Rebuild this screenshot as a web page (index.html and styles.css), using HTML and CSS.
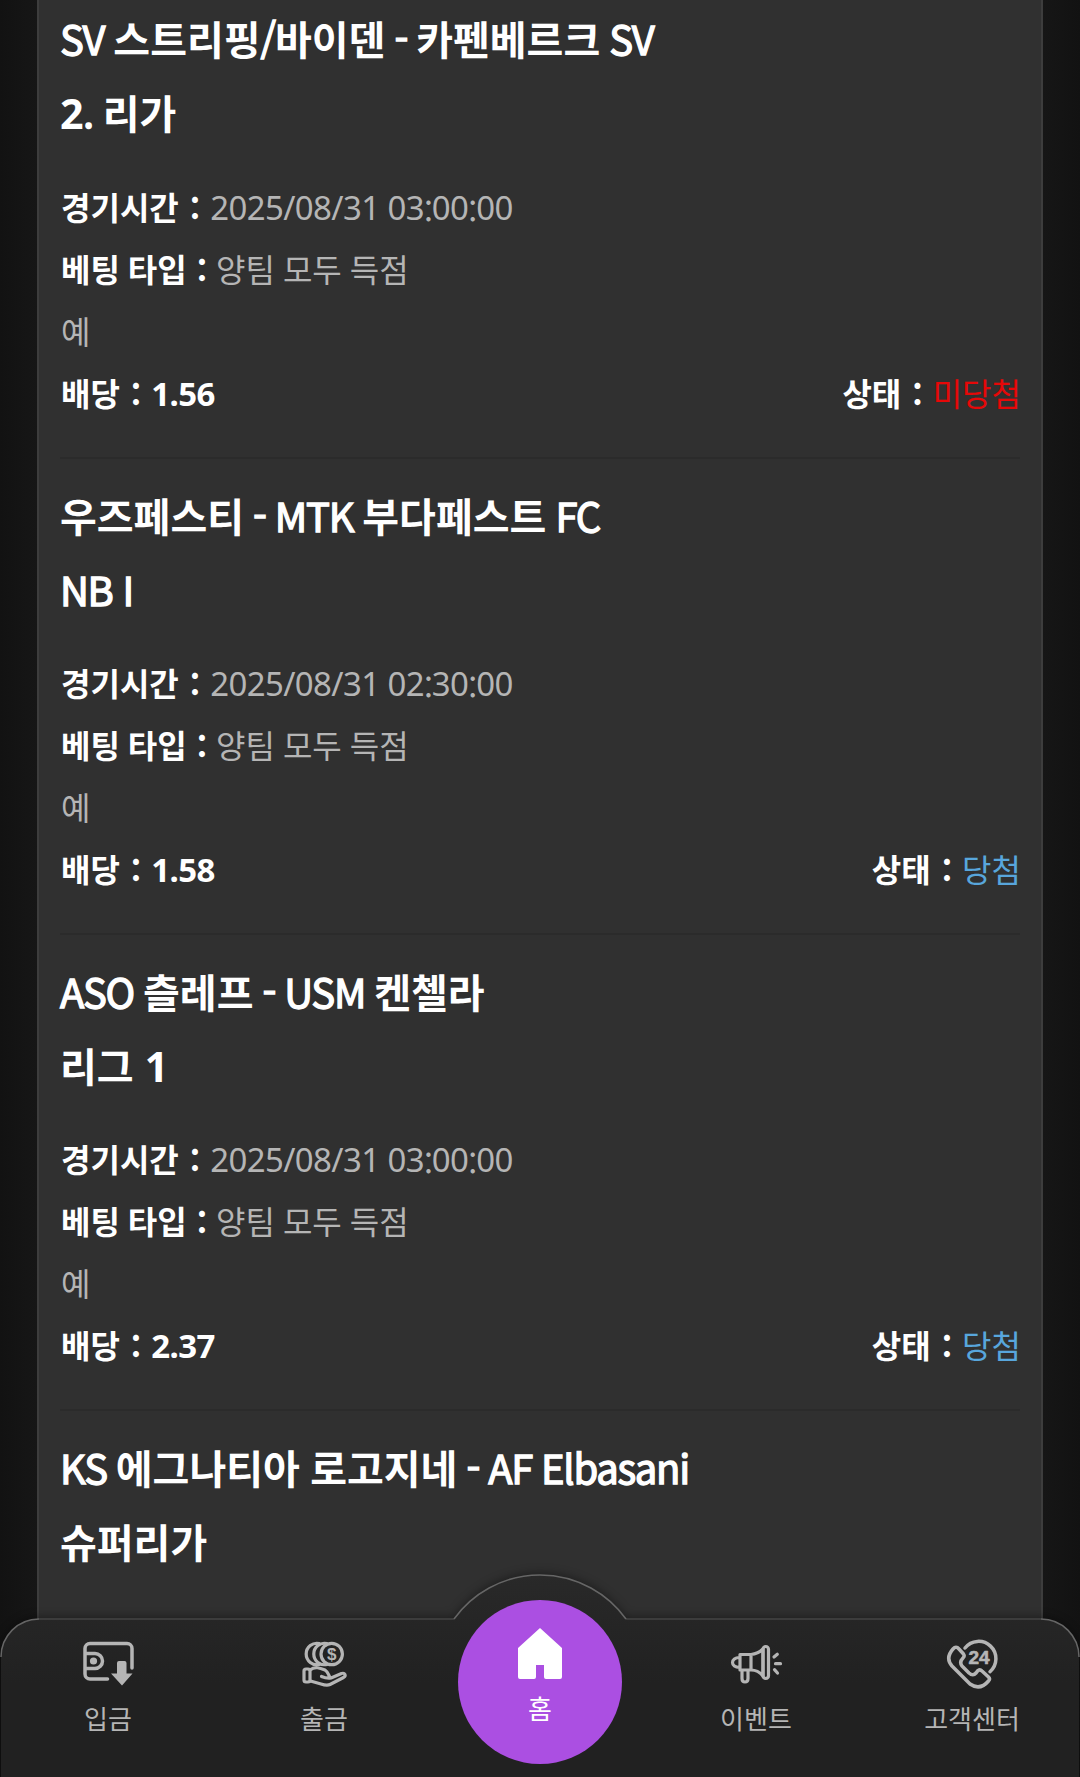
FILE: index.html
```
<!DOCTYPE html>
<html lang="ko">
<head>
  <meta charset="UTF-8">
  <meta name="viewport" content="width=device-width, initial-scale=1.0">
  <title>베팅 내역</title>
  <link rel="stylesheet" href="styles.css">
</head>
<body>
  <main class="page">
    <section class="bet-list">
      <article class="bet">
        <h2 class="bet-title"><span class="lat">SV </span>스트리핑<span class="lat">/</span>바이덴<span class="lat"> - </span>카펜베르크<span class="lat"> SV</span></h2>
        <h3 class="bet-league"><span class="num">2</span><span class="lat">. </span>리가</h3>
        <div class="bet-info">
          <p><b>경기시간 <i>:</i></b> <span class="num">2025/08/31 03</span><span class="colon">:</span><span class="num">00</span><span class="colon">:</span><span class="num">00</span></p>
          <p class="bet-type"><b>베팅 타입 <i>:</i></b> 양팀 모두 득점</p>
          <p>예</p>
          <div class="bet-row">
            <b>배당 <i>:</i> <span class="num">1.56</span></b>
            <p><b>상태 <i>:</i></b> <span class="lose">미당첨</span></p>
          </div>
        </div>
      </article>

      <article class="bet">
        <h2 class="bet-title">우즈페스티<span class="lat"> - MTK </span>부다페스트<span class="lat"> FC</span></h2>
        <h3 class="bet-league"><span class="lat">NB I</span></h3>
        <div class="bet-info">
          <p><b>경기시간 <i>:</i></b> <span class="num">2025/08/31 02</span><span class="colon">:</span><span class="num">30</span><span class="colon">:</span><span class="num">00</span></p>
          <p class="bet-type"><b>베팅 타입 <i>:</i></b> 양팀 모두 득점</p>
          <p>예</p>
          <div class="bet-row">
            <b>배당 <i>:</i> <span class="num">1.58</span></b>
            <p><b>상태 <i>:</i></b> <span class="win">당첨</span></p>
          </div>
        </div>
      </article>

      <article class="bet">
        <h2 class="bet-title"><span class="lat">ASO </span>츨레프<span class="lat"> - USM </span>켄첼라</h2>
        <h3 class="bet-league">리그 <span class="num">1</span></h3>
        <div class="bet-info">
          <p><b>경기시간 <i>:</i></b> <span class="num">2025/08/31 03</span><span class="colon">:</span><span class="num">00</span><span class="colon">:</span><span class="num">00</span></p>
          <p class="bet-type"><b>베팅 타입 <i>:</i></b> 양팀 모두 득점</p>
          <p>예</p>
          <div class="bet-row">
            <b>배당 <i>:</i> <span class="num">2.37</span></b>
            <p><b>상태 <i>:</i></b> <span class="win">당첨</span></p>
          </div>
        </div>
      </article>

      <article class="bet">
        <h2 class="bet-title"><span class="lat">KS </span>에그나티아 로고지네<span class="lat"> - AF Elbasani</span></h2>
        <h3 class="bet-league">슈퍼리가</h3>
      </article>
    </section>
  </main>

  <nav class="tabbar">
    <svg class="tabbar-bg" viewBox="0 0 1080 217" width="1080" height="217">
      <defs>
        <linearGradient id="bar" x1="0" y1="0" x2="0" y2="1">
          <stop offset="0" stop-color="#292929"/>
          <stop offset=".5" stop-color="#212121"/>
          <stop offset="1" stop-color="#212121"/>
        </linearGradient>
      </defs>
      <path class="bar-shape" fill="url(#bar)" d="M1 230V97A38 38 0 0 1 39 59H454A106 106 0 0 1 626 59H1041A38 38 0 0 1 1079 97V230Z"/>
      <path fill="none" stroke="#3c3c3c" stroke-width="2" d="M39 59H454M626 59H1041"/>
      <path fill="none" stroke="#666" stroke-width="1.5" d="M1 97A38 38 0 0 1 39 59M454 59A106 106 0 0 1 626 59M1041 59A38 38 0 0 1 1079 97"/>
    </svg>

    <a class="tab">
      <svg class="tab-icon" viewBox="0 0 54 54">
        <path d="M26.500 44H9a5 5 0 0 1-5-5V13.500a5 5 0 0 1 5-5h37a5 5 0 0 1 5 5V33M4 18.500h10a7.500 7.500 0 0 1 0 15H4"/>
        <circle class="fill" cx="12.500" cy="26" r="3.600"/>
        <path class="fill" d="M36 28q0-2 2-2h5.500q2 0 2 2v10.500h6L41 50.500 30 38.500h6z"/>
      </svg>
      <span>입금</span>
    </a>
    <a class="tab">
      <svg class="tab-icon thin" viewBox="0 0 54 54">
        <circle cx="34.700" cy="19" r="10.700"/>
        <path d="M30 8.600A10.700 10.700 0 1 0 30 29.400M22.400 8.600A10.700 10.700 0 1 0 22.400 29.400"/>
        <rect x="7" y="34" width="6" height="13" rx="2"/>
        <path d="M13 35C18 31 23 33 28 35 31 37 31 39 33 42.500M24.500 41.500C28 43 31 43.500 34 43L44.500 38.500C48 37.500 49.500 40.500 46.500 42.500L33 49.500C30 51 27 50 24 49L13.500 46"/>
        <text class="coin" x="34.700" y="24.700">$</text>
      </svg>
      <span>출금</span>
    </a>
    <a class="tab home">
      <svg class="home-icon" viewBox="0 0 46 52">
        <path d="M23 0L45 20V49q0 2-2 2H29q-2 0-2-2V37H19V49q0 2-2 2H3q-2 0-2-2V20z"/>
      </svg>
      <span>홈</span>
    </a>
    <a class="tab">
      <svg class="tab-icon thin" viewBox="0 0 54 54">
        <path d="M11 19.500H22V35H11zM22 19.500Q29 19 34 14V41Q29 35 22 35M11 22.500C1 22 1 33 11 32.500M13 35v8.500q0 3.500 3 3.500t3-3.500V35"/>
        <rect x="34" y="11.500" width="5.500" height="32" rx="2.750"/>
        <path d="M45 22l3.300-2.800M46.500 28.700h5M45.500 34.700l3 3.300"/>
      </svg>
      <span>이벤트</span>
    </a>
    <a class="tab">
      <svg class="tab-icon" viewBox="0 0 54 54">
        <path d="M20 13A17.300 17.300 0 1 1 45 36.700"/>
        <path d="M8 14Q11 10.500 14 14L18.500 19Q20 21 18 23 14 27 17 31L24 38Q28 41.500 31 38 34 33 37 36L43.500 42Q45.500 44 43.500 46 35 56 25 49L7 31Q0 23 8 14z"/>
        <text class="hours" x="34" y="28.500">24</text>
      </svg>
      <span>고객센터</span>
    </a>
  </nav>
</body>
</html>
```
FILE: styles.css
```
* {
  box-sizing: border-box;
  margin: 0;
  padding: 0;
}

body {
  height: 1777px;
  overflow: hidden;
  background: #131313;
  color: #b5b5b5;
  font-family: "Noto Sans CJK KR", sans-serif;
  font-size: 32px;
}

.page {
  height: 1777px;
  padding: 0 37px;
  overflow: hidden;
  background: linear-gradient(90deg, #121212, #161616 37px, #161616 1043px, #121212);
}

.bet-list {
  height: 1777px;
  padding: 0 21px;
  background: #303030;
  border-left: 2px solid #3d3d3d;
  border-right: 2px solid #3d3d3d;
}

.bet {
  height: 476px;
  padding-top: 19px;
  border-bottom: 2px solid #2b2b2b;
}

.bet:first-child {
  height: 459px;
  padding-top: 1px;
}

.bet-title,
.bet-league {
  height: 74px;
  color: #fff;
  font-size: 40px;
  font-weight: 700;
  line-height: 74px;
  white-space: nowrap;
}

.bet-title {
  word-spacing: -0.8px;
}

/* latin glyphs are lighter and set tighter than the hangul */
.lat {
  font-weight: 400;
  letter-spacing: -1.3px;
  -webkit-text-stroke: 1.3px #fff;
}

.bet-info {
  padding: 25px 0 0 1px;
  margin-right: -1px;
  line-height: 62px;
}

.bet:first-child .bet-info {
  padding-top: 26px;
}

.bet-info p,
.bet-row {
  height: 62px;
}

.bet-info b {
  color: #fff;
  font-weight: 700;
}

.bet-info i {
  padding: 0 1px 0 2px;
  font-style: normal;
  line-height: 1;
  vertical-align: -1px;
}

.bet-type {
  word-spacing: -1px;
}

.bet-row {
  display: flex;
  justify-content: space-between;
}

.num {
  font-family: "Noto Sans", sans-serif;
  font-size: 1.03em;
  letter-spacing: -0.6px;
  line-height: 1;
}

.colon {
  line-height: 1;
  letter-spacing: -1px;
  vertical-align: -4px;
}

.win {
  color: #58a6dc;
}

.lose {
  color: #e60808;
}

.tabbar {
  position: absolute;
  left: 0;
  bottom: 0;
  width: 1080px;
  height: 217px;
  display: grid;
  grid-template-columns: repeat(5, 1fr);
}

.tabbar-bg {
  position: absolute;
  left: 0;
  top: 0;
}

.bar-shape {
  filter: drop-shadow(0 -2px 5px rgba(0, 0, 0, 0.4));
}

.tab {
  position: relative;
  display: flex;
  flex-direction: column;
  align-items: center;
  padding-top: 75px;
  font-size: 26px;
  line-height: 38px;
}

.tab-icon {
  width: 54px;
  height: 54px;
  margin-bottom: 10px;
  fill: none;
  stroke: #b5b5b5;
  stroke-width: 3.5;
  stroke-linecap: round;
  stroke-linejoin: round;
}

.thin {
  stroke-width: 3.2;
}

.tab-icon .fill {
  fill: #b5b5b5;
  stroke: none;
}

.tab-icon text {
  fill: #b5b5b5;
  stroke: none;
  font-family: "Liberation Sans", sans-serif;
  font-weight: 700;
  text-anchor: middle;
}

.tab-icon .coin {
  font-size: 17px;
}

.tab-icon .hours {
  font-size: 19px;
  stroke: #b5b5b5;
  stroke-width: 0.6;
}

.home {
  width: 164px;
  height: 164px;
  margin: 40px auto 0;
  padding-top: 28px;
  border-radius: 50%;
  background: #ab4fe2;
  color: #fff;
}

.home-icon {
  width: 46px;
  height: 52px;
  margin-bottom: 9px;
  fill: #fff;
}
```
